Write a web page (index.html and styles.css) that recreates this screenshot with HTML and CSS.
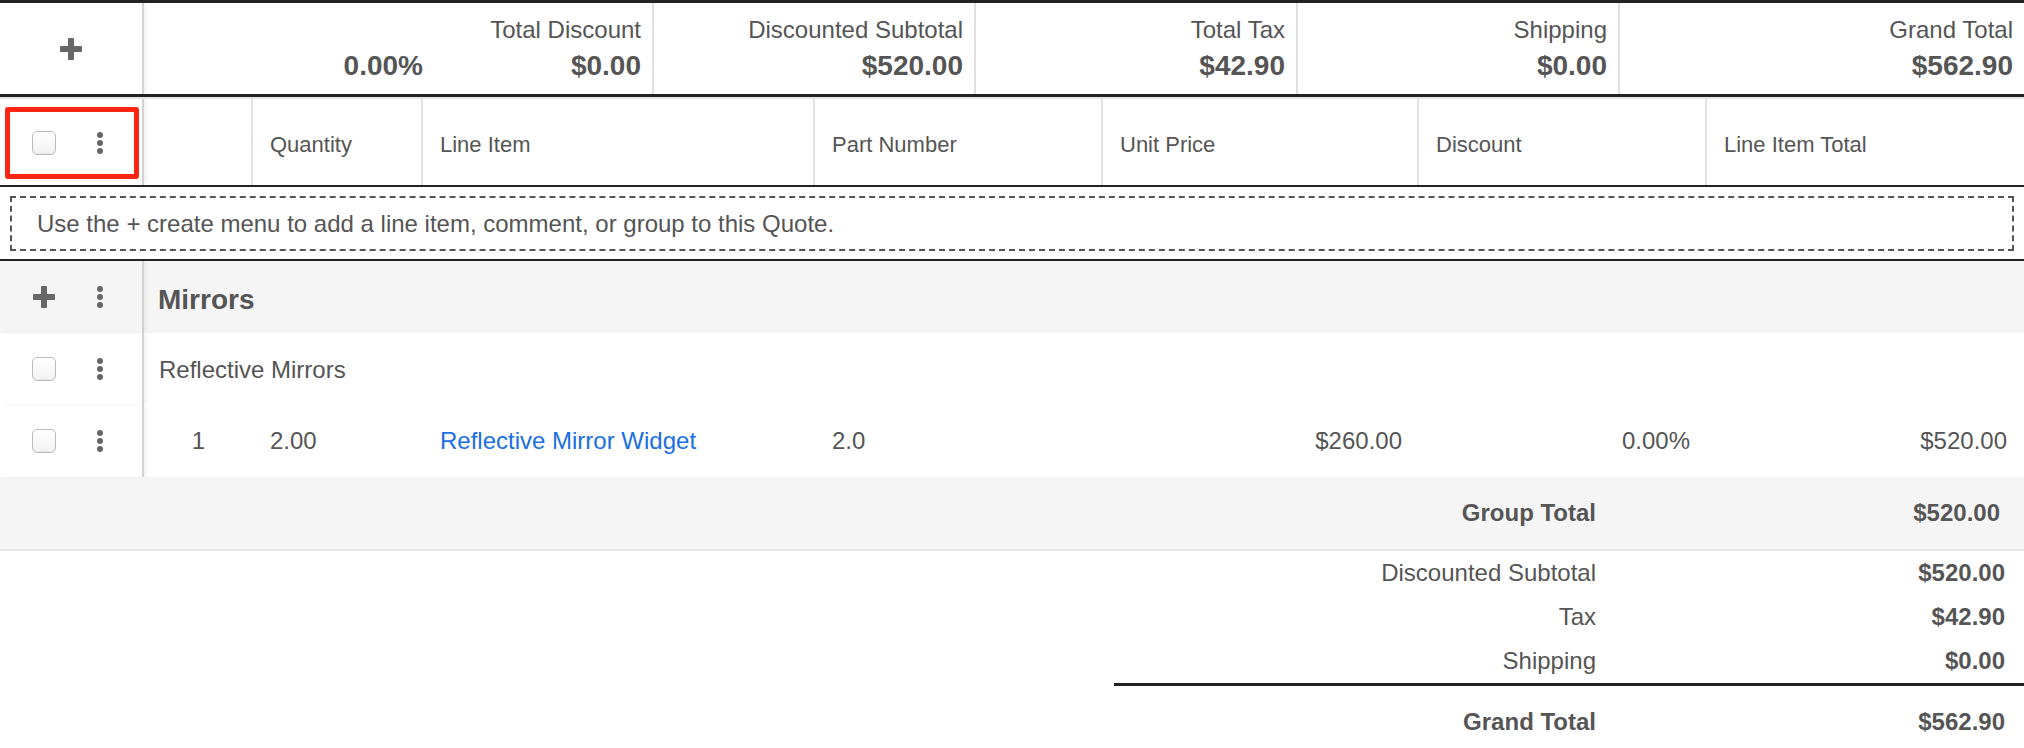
FILE: index.html
```html
<!DOCTYPE html>
<html lang="en">
<head>
    <meta charset="UTF-8">
    <title>Quote Line Items</title>
    <link rel="stylesheet" href="styles.css">
</head>
<body>
    <div class="worksheet">
        <!-- totals bar -->
        <div class="summary">
            <div class="lead lead-center">
                <svg class="plus" width="22" height="22" viewBox="0 0 22 22"><rect x="0" y="8" width="22" height="6" rx="1"/><rect x="8" y="0" width="6" height="22" rx="1"/></svg>
            </div>
            <div class="sum-cell sum-pct">
                <span class="sum-label"></span>
                <span class="sum-value">0.00%</span>
            </div>
            <div class="sum-cell">
                <span class="sum-label">Total Discount</span>
                <span class="sum-value">$0.00</span>
            </div>
            <div class="sum-cell">
                <span class="sum-label">Discounted Subtotal</span>
                <span class="sum-value">$520.00</span>
            </div>
            <div class="sum-cell">
                <span class="sum-label">Total Tax</span>
                <span class="sum-value">$42.90</span>
            </div>
            <div class="sum-cell">
                <span class="sum-label">Shipping</span>
                <span class="sum-value">$0.00</span>
            </div>
            <div class="sum-cell">
                <span class="sum-label">Grand Total</span>
                <span class="sum-value">$562.90</span>
            </div>
        </div>

        <!-- column headers -->
        <div class="cols row-grid">
            <div class="lead lead-head">
                <div class="mark">
                    <span class="slot"><input type="checkbox" class="check"></span>
                    <svg class="kebab" width="6" height="22" viewBox="0 0 6 22"><circle cx="3" cy="3" r="3"/><circle cx="3" cy="11" r="3"/><circle cx="3" cy="19" r="3"/></svg>
                </div>
            </div>
            <div class="col-h"></div>
            <div class="col-h">Quantity</div>
            <div class="col-h">Line Item</div>
            <div class="col-h">Part Number</div>
            <div class="col-h">Unit Price</div>
            <div class="col-h">Discount</div>
            <div class="col-h">Line Item Total</div>
        </div>

        <div class="hint">
            <div class="hint-box">Use the + create menu to add a line item, comment, or group to this Quote.</div>
        </div>

        <!-- group -->
        <div class="group-head">
            <div class="lead">
                <span class="slot">
                    <svg class="plus" width="22" height="22" viewBox="0 0 22 22"><rect x="0" y="8" width="22" height="6" rx="1"/><rect x="8" y="0" width="6" height="22" rx="1"/></svg>
                </span>
                <svg class="kebab" width="6" height="22" viewBox="0 0 6 22"><circle cx="3" cy="3" r="3"/><circle cx="3" cy="11" r="3"/><circle cx="3" cy="19" r="3"/></svg>
            </div>
            <div class="group-name">Mirrors</div>
        </div>

        <div class="comment-row">
            <div class="lead">
                <span class="slot"><input type="checkbox" class="check"></span>
                <svg class="kebab" width="6" height="22" viewBox="0 0 6 22"><circle cx="3" cy="3" r="3"/><circle cx="3" cy="11" r="3"/><circle cx="3" cy="19" r="3"/></svg>
            </div>
            <div class="comment">Reflective Mirrors</div>
        </div>

        <div class="item-row row-grid">
            <div class="lead">
                <span class="slot"><input type="checkbox" class="check"></span>
                <svg class="kebab" width="6" height="22" viewBox="0 0 6 22"><circle cx="3" cy="3" r="3"/><circle cx="3" cy="11" r="3"/><circle cx="3" cy="19" r="3"/></svg>
            </div>
            <div class="cell num">1</div>
            <div class="cell">2.00</div>
            <div class="cell"><a href="#">Reflective Mirror Widget</a></div>
            <div class="cell">2.0</div>
            <div class="cell amt">$260.00</div>
            <div class="cell amt">0.00%</div>
            <div class="cell amt">$520.00</div>
        </div>

        <div class="group-total">
            <span class="gt-label">Group Total</span>
            <span class="gt-value">$520.00</span>
        </div>

        <!-- quote totals -->
        <div class="totals">
            <span class="t-label">Discounted Subtotal</span>
            <span class="t-value">$520.00</span>
            <span class="t-label">Tax</span>
            <span class="t-value">$42.90</span>
            <span class="t-label">Shipping</span>
            <span class="t-value">$0.00</span>
            <span class="t-label grand">Grand Total</span>
            <span class="t-value grand">$562.90</span>
        </div>
    </div>
</body>
</html>
```

FILE: styles.css
```css
* {
    box-sizing: border-box;
}

body {
    margin: 0;
    font-family: 'Liberation Sans', Arial, sans-serif;
    color: #555;
    background: #fff;
}

.plus {
    fill: #666;
    display: block;
}

.kebab {
    fill: #666;
    display: block;
}

.check {
    appearance: none;
    -webkit-appearance: none;
    margin: 0;
    width: 24px;
    height: 24px;
    border: 1px solid #bcbcbc;
    border-radius: 5px;
    background: linear-gradient(#fff, #f2f2f2);
    box-shadow: inset 0 -1px 1px rgba(0, 0, 0, 0.05);
    display: block;
}

.lead {
    display: flex;
    align-items: center;
    gap: 41px;
    padding-left: 32px;
    border-right: 2px solid #d3d3d3;
    box-shadow: 3px 0 4px -1px rgba(0, 0, 0, 0.07);
    position: relative;
    z-index: 1;
    width: 144px;
    flex-shrink: 0;
}

.lead-center {
    justify-content: center;
    padding-left: 0;
}

.slot {
    width: 24px;
    display: flex;
    justify-content: center;
}

/* totals bar */
.summary {
    display: grid;
    grid-template-columns: 144px 290px 220px 322px 322px 322px 1fr;
    border-top: 3px solid #222;
    border-bottom: 3px solid #222;
}

.sum-cell {
    display: flex;
    flex-direction: column;
    align-items: flex-end;
    gap: 6px;
    padding: 13px 11px 12px;
    border-right: 2px solid #e0e0e0;
}

.sum-pct,
.sum-cell:last-child {
    border-right: 0;
}

.sum-label {
    font-size: 24px;
    line-height: 28px;
    height: 28px;
}

.sum-value {
    font-size: 28px;
    line-height: 32px;
    font-weight: bold;
}

/* line item columns */
.row-grid {
    display: grid;
    grid-template-columns: 144px 109px 170px 392px 288px 316px 288px 1fr;
}

.cols {
    border-top: 2px solid #e6e6e6;
    border-bottom: 2px solid #222;
}

.cols > div {
    height: 86px;
}

.col-h {
    display: flex;
    align-items: center;
    padding: 5px 0 0 17px;
    font-size: 22px;
    border-right: 2px solid #e2e2e2;
}

.col-h:last-child {
    border-right: 0;
}

.lead-head {
    padding: 8px 3px 6px 5px;
    align-items: stretch;
}

.mark {
    flex: 1;
    display: flex;
    align-items: center;
    gap: 41px;
    padding-left: 22px;
    border: 5px solid #fe2612;
    border-radius: 3px;
}

.hint {
    padding: 9px 10px 8px;
    border-bottom: 2px solid #222;
}

.hint-box {
    height: 55px;
    display: flex;
    align-items: center;
    padding-left: 25px;
    border: 2px dashed #555;
    font-size: 24px;
}

/* group */
.group-head {
    display: flex;
    height: 72px;
    background: #f5f5f5;
}

.group-name {
    align-self: center;
    padding: 5px 0 0 14px;
    font-size: 28px;
    font-weight: bold;
}

.comment-row {
    display: flex;
    height: 72px;
}

.comment {
    align-self: center;
    padding: 2px 0 0 15px;
    font-size: 24px;
}

.item-row {
    height: 72px;
}

.cell {
    display: flex;
    align-items: center;
    padding-left: 17px;
    font-size: 24px;
}

.cell a {
    color: #1a6fe3;
    text-decoration: none;
}

.num {
    justify-content: center;
    padding-left: 0;
}

.amt {
    justify-content: flex-end;
    padding: 0 17px 0 0;
}

.group-total {
    display: grid;
    grid-template-columns: 1fr 428px;
    align-items: center;
    height: 74px;
    background: #f5f5f5;
    border-bottom: 2px solid #e8e8e8;
    font-size: 24px;
    font-weight: bold;
}

.gt-label {
    text-align: right;
}

.gt-value {
    text-align: right;
    padding-right: 24px;
}

/* quote totals */
.totals {
    width: 910px;
    margin-left: auto;
    display: grid;
    grid-template-columns: 482px 428px;
    font-size: 24px;
}

.t-label {
    text-align: right;
    line-height: 44px;
}

.t-value {
    text-align: right;
    padding-right: 19px;
    line-height: 44px;
    font-weight: bold;
}

.grand {
    border-top: 3px solid #222;
    padding-top: 13px;
    line-height: 46px;
    font-weight: bold;
}
```
